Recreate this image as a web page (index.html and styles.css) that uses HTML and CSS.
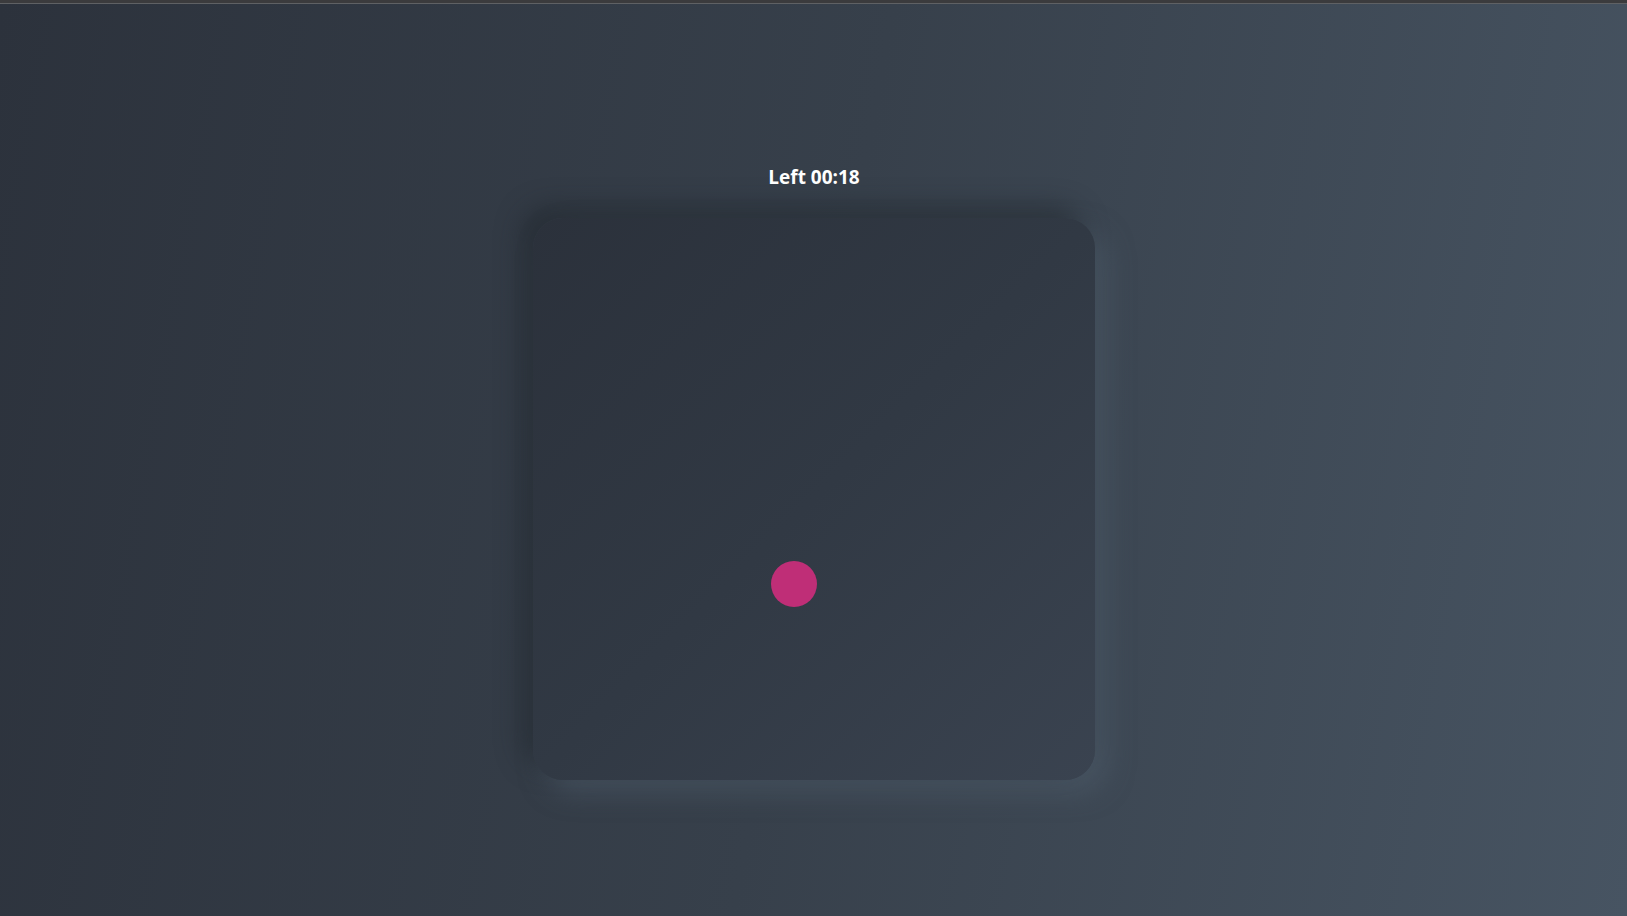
FILE: index.html
```html
<!DOCTYPE html>
<html lang="en">
<head>
<meta charset="utf-8">
<title>Catch the dot</title>
<link rel="stylesheet" href="styles.css">
</head>
<body>
<div class="topbar"></div>
<main class="stage">
  <div class="timer">Left 00:18</div>
  <div class="board">
    <div class="dot"></div>
  </div>
</main>
</body>
</html>
```
FILE: styles.css
```css
html, body {
  margin: 0;
  padding: 0;
  height: 100%;
}
body {
  background: linear-gradient(100deg, #2c323c 0%, #37404b 50%, #475462 100%);
  font-family: "Open Sans", "Noto Sans", sans-serif;
  overflow: hidden;
}
.topbar {
  height: 3px;
  background: #3b3b3d;
  border-bottom: 1px solid #5f6164;
}
.stage {
  display: flex;
  flex-direction: column;
  align-items: center;
  padding-top: 160px;
}
.timer {
  color: #ffffff;
  font-weight: 700;
  font-size: 19px;
  line-height: 26px;
  margin-bottom: 28px;
  margin-left: 1px;
}
.board {
  position: relative;
  width: 562px;
  height: 562px;
  border-radius: 30px;
  background: linear-gradient(135deg, #2b313b 0%, #313944 50%, #3a4350 100%);
  box-shadow: -12px -12px 24px rgba(30, 35, 42, 0.5), 12px 12px 26px rgba(80, 94, 110, 0.55);
}
.dot {
  position: absolute;
  left: 238px;
  top: 343px;
  width: 46px;
  height: 46px;
  border-radius: 50%;
  background: #bf2e77;
}
```
